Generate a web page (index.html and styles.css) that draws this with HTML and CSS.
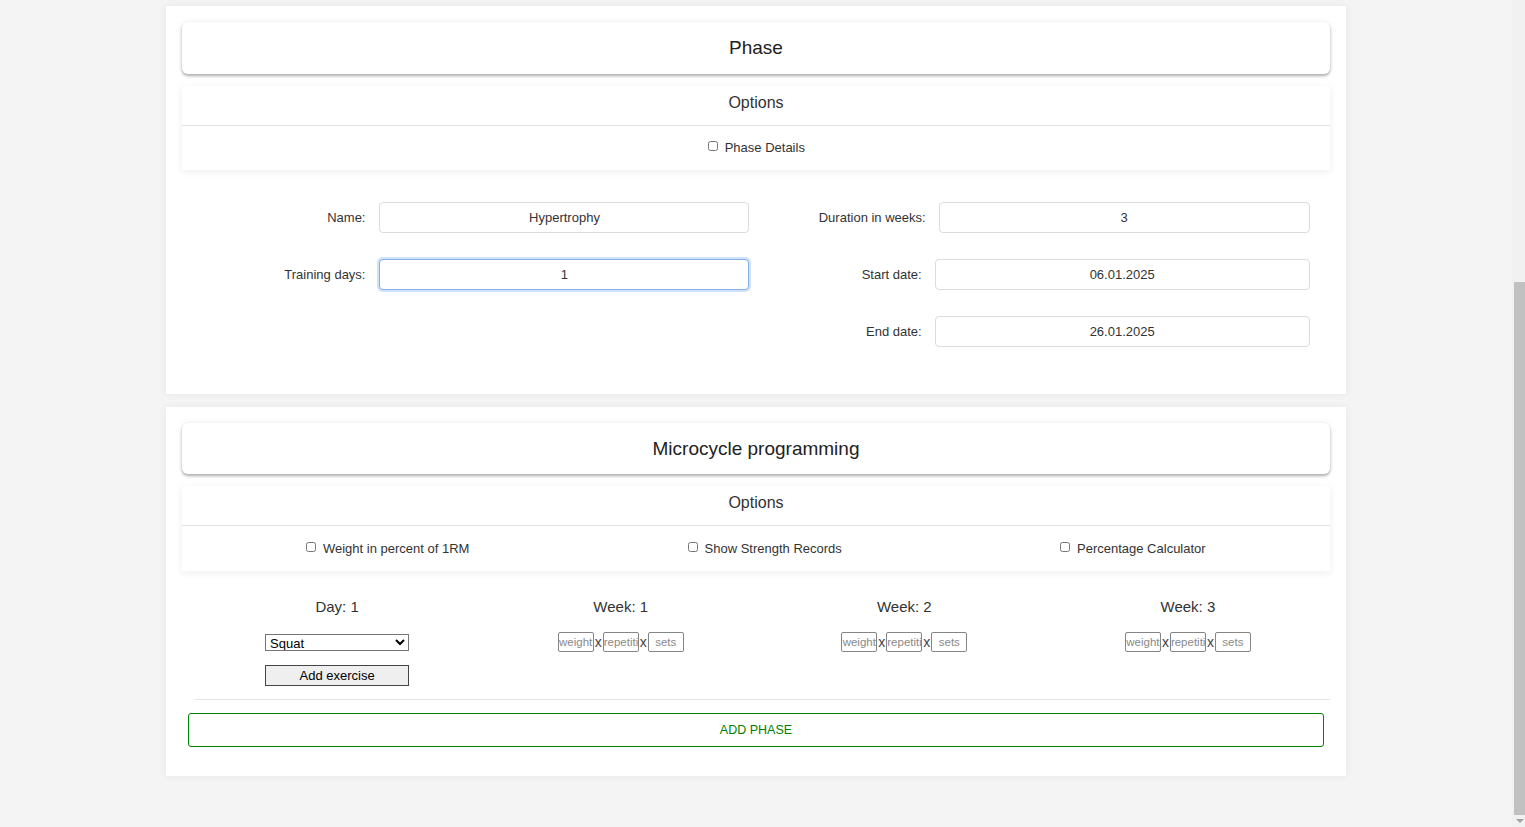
FILE: index.html
```html
<!DOCTYPE html>
<html lang="en">
<head>
<meta charset="utf-8">
<title>Phase</title>
<link rel="stylesheet" href="styles.css">
</head>
<body>
<main class="page">
  <section class="card card-phase">
    <div class="card-title">Phase</div>
    <div class="options">
      <div class="options-title">Options</div>
      <div class="options-row options-row-center">
        <label class="check"><input type="checkbox"> Phase Details</label>
      </div>
    </div>
    <div class="phase-form">
      <div class="form-col form-col-left">
        <div class="field">
          <label class="field-label">Name:</label>
          <input class="field-input w370" type="text" value="Hypertrophy">
        </div>
        <div class="field">
          <label class="field-label">Training days:</label>
          <input class="field-input w370 focused" type="text" value="1">
        </div>
      </div>
      <div class="form-col form-col-right">
        <div class="field">
          <label class="field-label">Duration in weeks:</label>
          <input class="field-input w371" type="text" value="3">
        </div>
        <div class="field">
          <label class="field-label">Start date:</label>
          <input class="field-input w375" type="text" value="06.01.2025">
        </div>
        <div class="field">
          <label class="field-label">End date:</label>
          <input class="field-input w375" type="text" value="26.01.2025">
        </div>
      </div>
    </div>
  </section>

  <section class="card card-micro">
    <div class="card-title">Microcycle programming</div>
    <div class="options">
      <div class="options-title">Options</div>
      <div class="options-row options-row-spread">
        <label class="check"><input type="checkbox"> Weight in percent of 1RM</label>
        <label class="check"><input type="checkbox"> Show Strength Records</label>
        <label class="check"><input type="checkbox"> Percentage Calculator</label>
      </div>
    </div>
    <div class="micro">
      <div class="micro-col">
        <h4 class="micro-head">Day: 1</h4>
        <select class="exercise-select">
          <option>Squat</option>
          <option>Bench press</option>
          <option>Deadlift</option>
        </select>
        <button class="add-exercise" type="button">Add exercise</button>
      </div>
      <div class="micro-col">
        <h4 class="micro-head">Week: 1</h4>
        <div class="set-row">
          <input class="set-input" type="text" placeholder="weight"><span class="times">x</span><input class="set-input" type="text" placeholder="repetitions"><span class="times">x</span><input class="set-input" type="text" placeholder="sets">
        </div>
      </div>
      <div class="micro-col">
        <h4 class="micro-head">Week: 2</h4>
        <div class="set-row">
          <input class="set-input" type="text" placeholder="weight"><span class="times">x</span><input class="set-input" type="text" placeholder="repetitions"><span class="times">x</span><input class="set-input" type="text" placeholder="sets">
        </div>
      </div>
      <div class="micro-col">
        <h4 class="micro-head">Week: 3</h4>
        <div class="set-row">
          <input class="set-input" type="text" placeholder="weight"><span class="times">x</span><input class="set-input" type="text" placeholder="repetitions"><span class="times">x</span><input class="set-input" type="text" placeholder="sets">
        </div>
      </div>
    </div>
    <hr class="divider">
    <button class="add-phase" type="button">ADD PHASE</button>
  </section>
</main>
<div class="scrollbar" aria-hidden="true">
  <div class="scrollbar-thumb"></div>
  <div class="scrollbar-arrow"><span class="scrollbar-tri"></span></div>
</div>
</body>
</html>
```

FILE: styles.css
```css
html, body {
  margin: 0;
  padding: 0;
}

body {
  background: #f4f4f4;
  font-family: "Liberation Sans", Arial, sans-serif;
  color: #333;
  padding-right: 13px;
  overflow: hidden;
}

/* classic browser scrollbar drawn over the right edge */
.scrollbar {
  position: fixed;
  top: 0;
  right: 0;
  bottom: 0;
  width: 13px;
  background: #f1f1f1;
  display: flex;
  flex-direction: column;
}

.scrollbar-thumb {
  flex: 1;
  margin: 282px 0 0 2px;
  background: #c1c1c1;
}

.scrollbar-arrow {
  height: 12px;
  display: flex;
  align-items: center;
  justify-content: center;
  padding-left: 2px;
}

.scrollbar-tri {
  width: 0;
  height: 0;
  border-left: 4px solid transparent;
  border-right: 4px solid transparent;
  border-top: 4px solid #a3a3a3;
}

.page {
  width: 78%;
  margin: 0 auto;
  padding: 6px 0 51px;
}

.card {
  background: #fff;
  box-shadow: 0 0 8px rgba(0, 0, 0, 0.06);
  padding: 16px;
}

.card-phase {
  padding-bottom: 47px;
}

.card-micro {
  margin-top: 13px;
  padding-bottom: 29px;
}

.card-title {
  height: 52px;
  display: flex;
  align-items: center;
  justify-content: center;
  font-size: 19px;
  color: #222;
  background: #fff;
  border-radius: 6px;
  box-shadow: 0 2px 3px rgba(0, 0, 0, 0.3), 0 0 6px rgba(0, 0, 0, 0.07);
}

.card-micro .card-title {
  height: 51px;
}

.options {
  margin-top: 12px;
  background: #fff;
  box-shadow: 0 2px 8px rgba(0, 0, 0, 0.07);
}

.options-title {
  box-sizing: border-box;
  height: 40px;
  padding-top: 8px;
  line-height: 18px;
  text-align: center;
  font-size: 16px;
  color: #333;
  border-bottom: 1px solid #e2e2e2;
}

.options-row {
  box-sizing: border-box;
  height: 44px;
  padding-bottom: 2px;
  display: flex;
  align-items: center;
  font-size: 13px;
  color: #333;
}

.options-row-center {
  justify-content: center;
  padding-right: 3px;
}

.options-row-spread {
  height: 45px;
  padding-bottom: 1px;
  justify-content: space-between;
  padding-left: 120px;
  padding-right: 124px;
}

.check {
  display: inline-flex;
  align-items: center;
  white-space: pre;
}

.check input {
  width: 10px;
  height: 10px;
  margin: 0 3px 2px 4px;
}

.phase-form {
  display: grid;
  grid-template-columns: 1fr 1fr;
  padding-top: 32px;
}

.form-col {
  display: flex;
  flex-direction: column;
  gap: 26px;
}

.form-col-left {
  padding-right: 6.5px;
}

.form-col-right {
  padding-right: 20px;
}

.field {
  display: flex;
  align-items: center;
  gap: 14px;
}

.form-col-right .field {
  gap: 13px;
}

.field-label {
  flex: 1;
  text-align: right;
  font-size: 13px;
  color: #333;
}

.field-input {
  box-sizing: border-box;
  height: 31px;
  border: 1px solid #dcdcdc;
  border-radius: 4px;
  background: #fff;
  font-family: "Liberation Sans", Arial, sans-serif;
  font-size: 13px;
  color: #333;
  text-align: center;
  padding: 0 8px;
  outline: none;
}

.w370 { width: 370px; }
.w371 { width: 371px; }
.w375 { width: 375px; }

.field-input.focused {
  border-color: #86b2ec;
  box-shadow: 0 0 0 2px rgba(120, 170, 245, 0.35);
}

.micro {
  display: grid;
  grid-template-columns: repeat(4, 1fr);
  margin-left: 13px;
  padding-top: 27px;
}

.micro-col {
  display: flex;
  flex-direction: column;
  align-items: center;
}

.micro-head {
  margin: 0;
  font-size: 15px;
  line-height: 18px;
  font-weight: normal;
  color: #333;
}

.exercise-select {
  box-sizing: border-box;
  width: 144px;
  height: 17px;
  margin-top: 18px;
  font-family: "Liberation Sans", Arial, sans-serif;
  font-size: 13px;
  color: #000;
  background: #fff;
}

.add-exercise {
  box-sizing: border-box;
  width: 144px;
  height: 21px;
  margin-top: 14px;
  padding: 0;
  background: #efefef;
  border: 1px solid #444;
  border-radius: 0;
  font-family: "Liberation Sans", Arial, sans-serif;
  font-size: 13px;
  color: #000;
}

.set-row {
  display: flex;
  align-items: center;
  margin-top: 16px;
}

.set-input {
  box-sizing: border-box;
  width: 36px;
  height: 20px;
  margin: 0;
  padding: 0;
  border: 1px solid #858585;
  border-radius: 2px;
  font-family: "Liberation Sans", Arial, sans-serif;
  font-size: 11.5px;
  text-align: center;
  background: #fff;
}

.set-input::placeholder {
  color: #8a8a8a;
}

.times {
  width: 9px;
  text-align: center;
  font-size: 14px;
  color: #444;
}

.divider {
  margin: 13px 0 0 13px;
  border: 0;
  border-top: 1px solid #e4e4e4;
  height: 0;
}

.add-phase {
  display: block;
  box-sizing: border-box;
  width: calc(100% - 12px);
  height: 34px;
  margin: 13px 6px 0;
  background: #fff;
  border: 1px solid #008000;
  border-radius: 3px;
  color: #008000;
  font-family: "Liberation Sans", Arial, sans-serif;
  font-size: 12.5px;
  cursor: pointer;
}
```
